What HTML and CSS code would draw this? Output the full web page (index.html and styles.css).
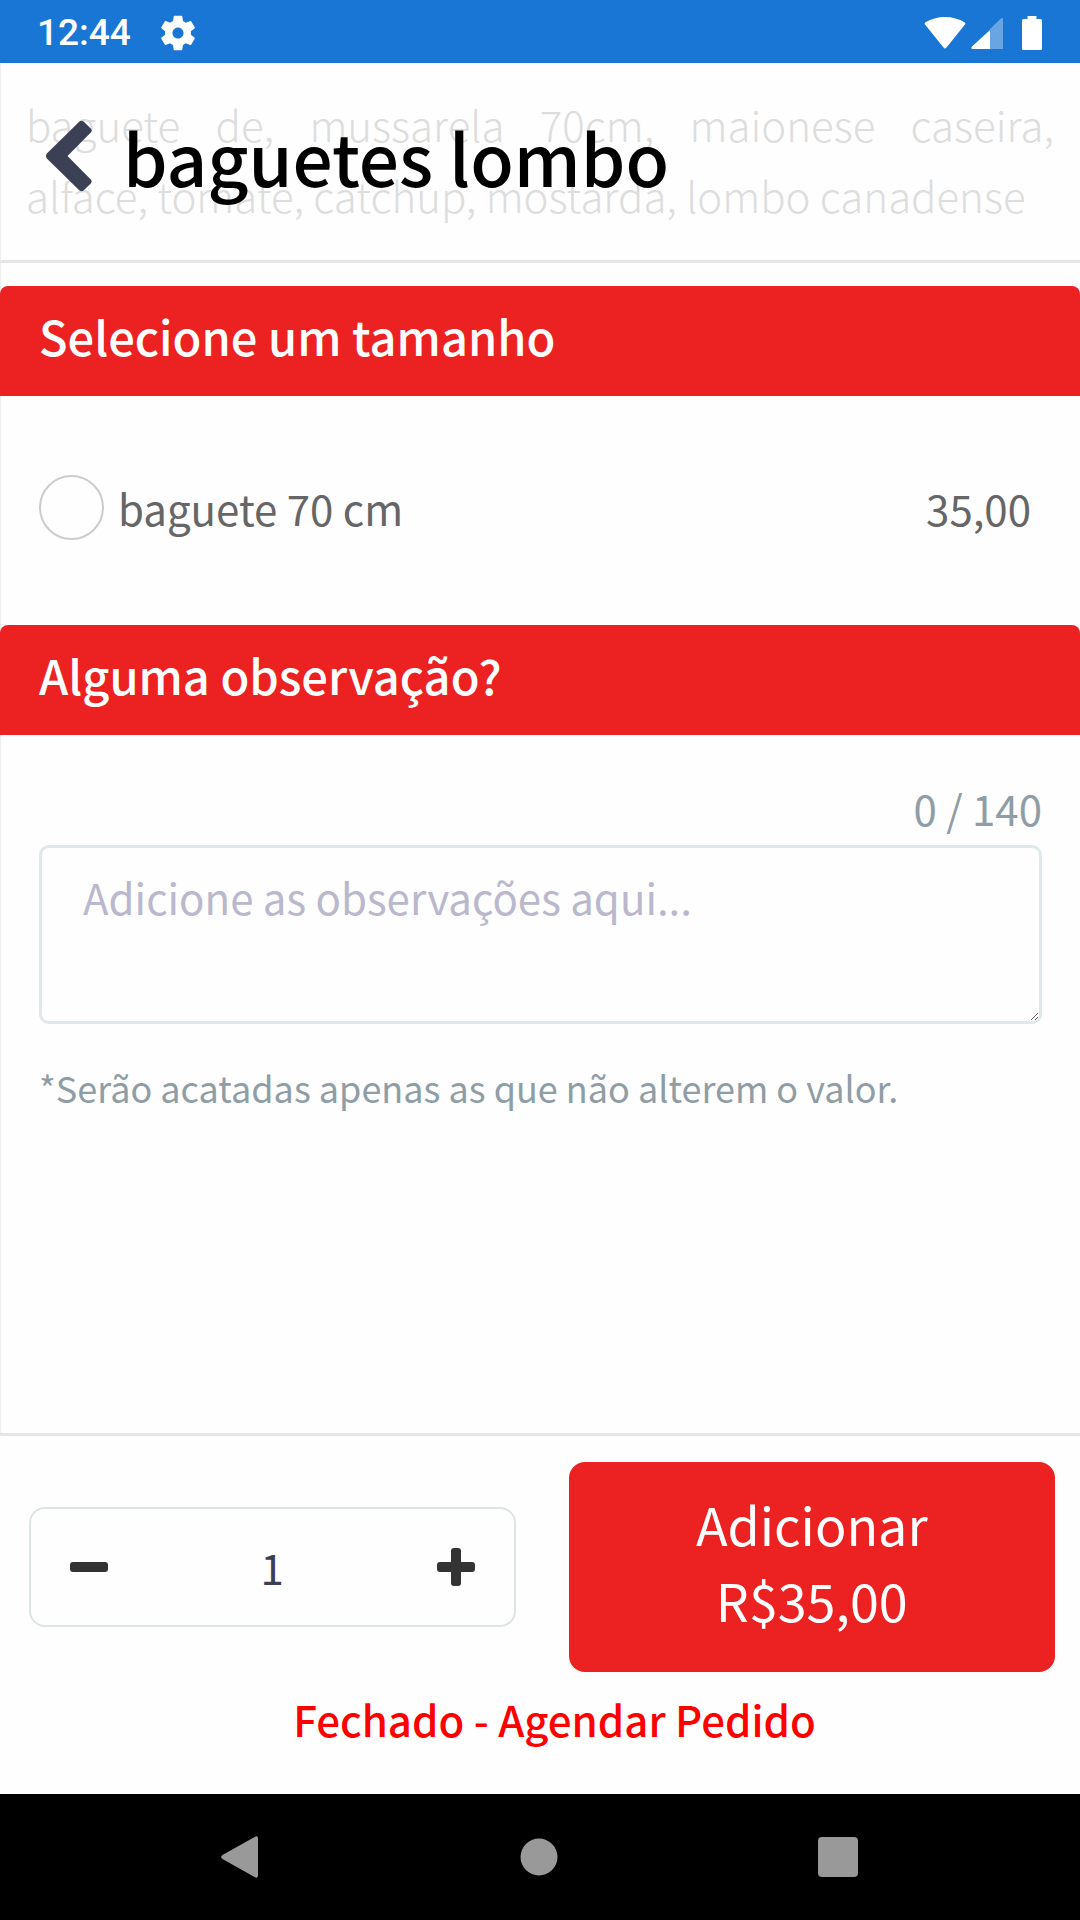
FILE: index.html
```html
<!DOCTYPE html>
<html lang="pt-BR">
<head>
  <meta charset="UTF-8">
  <meta name="viewport" content="width=device-width, initial-scale=1.0">
  <title>baguetes lombo</title>
  <link rel="stylesheet" href="styles.css">
</head>
<body>
  <!-- barra de status -->
  <div class="status-bar">
    <span class="clock">12:44</span>
    <svg class="gear" width="36" height="36" viewBox="2 2 20 20" fill="#fff">
      <path d="M19.14 12.94c.04-.3.06-.61.06-.94 0-.32-.02-.64-.07-.94l2.03-1.58a.49.49 0 0 0 .12-.61l-1.92-3.32a.49.49 0 0 0-.59-.22l-2.39.96c-.5-.38-1.03-.7-1.62-.94l-.36-2.54a.48.48 0 0 0-.48-.41h-3.84c-.24 0-.43.17-.47.41l-.36 2.54c-.59.24-1.13.57-1.62.94l-2.39-.96a.48.48 0 0 0-.59.22L2.74 8.87c-.12.21-.08.47.12.61l2.03 1.58c-.05.3-.09.63-.09.94s.02.64.07.94l-2.03 1.58a.49.49 0 0 0-.12.61l1.92 3.32c.12.22.37.29.59.22l2.39-.96c.5.38 1.03.7 1.62.94l.36 2.54c.05.24.24.41.48.41h3.84c.24 0 .44-.17.47-.41l.36-2.54c.59-.24 1.13-.56 1.62-.94l2.39.96c.22.08.47 0 .59-.22l1.92-3.32c.12-.22.07-.47-.12-.61l-2.01-1.58zM12 15.1A3.1 3.1 0 0 1 8.900 12c0-1.710 1.390-3.100 3.100-3.100s3.100 1.390 3.100 3.100-1.390 3.100-3.100 3.100z"/>
    </svg>
    <div class="status-icons">
      <svg width="42" height="34" viewBox="0 0 42 34" fill="#fff">
        <path d="M1 8.500Q0 7.500 1.200 6.500Q10 1 21 1Q32 1 40.800 6.500Q42 7.500 41 8.500L22.500 31.500Q21 33.500 19.500 31.500Z"/>
      </svg>
      <svg width="32" height="34" viewBox="0 0 32 34" fill="#fff">
        <path fill-opacity=".35" d="M19 13L30 2.500Q32 1.500 32 3V33H19Z"/>
        <path d="M19 14V33H1.500Q-.5 32.500 1 30.500Z"/>
      </svg>
      <svg class="battery" width="20" height="34" viewBox="0 0 20 34" fill="#fff">
        <path d="M5.500 0H14.500V3H18.500Q20 3 20 4.500V32.500Q20 34 18.500 34H1.500Q0 34 0 32.500V4.500Q0 3 1.500 3H5.500Z"/>
      </svg>
    </div>
  </div>

  <main class="content">
    <!-- cabeçalho fixo por cima da descrição -->
    <header class="page-header">
      <button class="back" type="button" aria-label="Voltar">
        <svg width="46" height="72" viewBox="0 0 46 72" fill="#3c4055">
          <path d="M.8 33.500L33.500 1.500Q35.500 0 37.500 1.500L44.800 8.500Q46.500 10.500 44.800 12.500L21.500 36L44.800 59.500Q46.500 61.500 44.800 63.500L37.500 70.500Q35.500 72 33.500 70.500L.8 38.500Q-.8 36 .8 33.500Z"/>
        </svg>
      </button>
      <h1>baguetes lombo</h1>
    </header>

    <p class="description">baguete de, mussarela 70cm, maionese caseira, alface, tomate, catchup, mostarda, lombo canadense</p>

    <!-- tamanho -->
    <section>
      <h2>Selecione um tamanho</h2>
      <div class="option">
        <input type="radio" name="tamanho" id="tamanho70">
        <label for="tamanho70">baguete 70 cm</label>
        <span class="price">35,00</span>
      </div>
    </section>

    <!-- observação -->
    <section>
      <h2><label for="obs">Alguma observação?</label></h2>
      <div class="notes">
        <div class="counter">0 / 140</div>
        <textarea id="obs" maxlength="140" placeholder="Adicione as observações aqui..."></textarea>
        <p class="hint">*Serão acatadas apenas as que não alterem o valor.</p>
      </div>
    </section>
  </main>

  <footer class="order">
    <div class="order-row">
      <div class="stepper">
        <button type="button" aria-label="Diminuir">
          <svg width="38" height="38" viewBox="0 0 38 38" fill="#333">
            <rect y="14" width="38" height="10" rx="3"/>
          </svg>
        </button>
        <input type="text" value="1" aria-label="Quantidade">
        <button type="button" aria-label="Aumentar">
          <svg width="38" height="38" viewBox="0 0 38 38" fill="#333">
            <rect y="14" width="38" height="10" rx="3"/>
            <rect x="14" width="10" height="38" rx="3"/>
          </svg>
        </button>
      </div>
      <button class="add" type="button">Adicionar<br>R$35,00</button>
    </div>
    <a class="closed" href="#">Fechado - Agendar Pedido</a>
  </footer>

  <!-- navegação do sistema -->
  <nav class="system-nav">
    <button type="button" aria-label="Voltar">
      <svg width="42" height="42" viewBox="0 0 42 42" fill="#999">
        <path d="M3.500 19L36 .8Q39 -.6 39 2.500V39.500Q39 42.600 36 41.200L3.500 23Q.8 21 3.500 19Z"/>
      </svg>
    </button>
    <button type="button" aria-label="Início">
      <svg width="42" height="42" viewBox="0 0 42 42" fill="#999">
        <circle cx="21" cy="21" r="18.500"/>
      </svg>
    </button>
    <button type="button" aria-label="Recentes">
      <svg width="42" height="42" viewBox="0 0 42 42" fill="#999">
        <rect x="1" y="1" width="40" height="40" rx="4"/>
      </svg>
    </button>
  </nav>
</body>
</html>
```

FILE: styles.css
```css
* {
  box-sizing: border-box;
}

body {
  margin: 0;
  min-height: 100vh;
  display: flex;
  flex-direction: column;
  background-color: #fefefe;
  font-family: "Noto Sans CJK JP", "Noto Sans", sans-serif;
  font-size: 42px;
  line-height: 60px;
}

h1, h2, p {
  margin: 0;
}

button, input, textarea {
  font: inherit;
}

button {
  border: 0;
  padding: 0;
  background: none;
  cursor: pointer;
}

svg {
  display: block;
}

.status-bar {
  display: flex;
  align-items: center;
  height: 63px;
  padding: 2px 38px 0 37px;
  background-color: #1976d5;
  color: #fff;
}

.clock {
  font-family: Roboto, sans-serif;
  font-size: 37px;
  font-weight: 500;
}

.gear {
  margin-left: 29px;
}

.status-icons {
  display: flex;
  gap: 5px;
  margin-left: auto;
}

.battery {
  margin-left: 14px;
}

.content {
  flex: 1;
  position: relative;
  box-shadow: inset 1px 0 #eee;
}

.page-header {
  position: absolute;
  top: 0;
  left: 0;
  right: 0;
  height: 200px;
  display: flex;
  align-items: center;
  gap: 31px;
  padding: 0 46px 12px;
  border-bottom: 3px solid #e5e5e5;
}

h1 {
  font-size: 71px;
  font-weight: 500;
  line-height: 80px;
  color: #000;
}

.description {
  padding: 25px 26px 56px;
  font-weight: 200;
  line-height: 71px;
  text-align: justify;
  color: #ddd;
}

h2 {
  padding: 20px 39px 30px;
  border-radius: 8px 8px 0 0;
  background-color: #ec2222;
  color: #fff;
  font-size: 47px;
  font-weight: 500;
}

.option {
  display: flex;
  align-items: center;
  padding: 79px 49px 85px 39px;
  color: #666;
}

.option input {
  appearance: none;
  width: 65px;
  height: 65px;
  margin: 0 14px 0 0;
  border: 2px solid #ccc;
  border-radius: 50%;
}

.option input:checked {
  border: 18px solid #ec2222;
}

.price {
  margin-left: auto;
}

.notes {
  padding: 43px 38px 0 39px;
  color: #8f9da5;
}

.counter {
  text-align: right;
}

textarea {
  display: block;
  width: 100%;
  height: 179px;
  margin-top: 7px;
  padding: 19px 41px;
  border: 3px solid #dfe8ea;
  border-radius: 10px;
  background-color: #fefefe;
  color: #3c4055;
}

textarea::placeholder {
  color: #b9b8cc;
}

.hint {
  margin-top: 38px;
  font-size: 36px;
  line-height: 50px;
}

.order {
  padding: 26px 25px 45px 29px;
  border-top: 3px solid #e5e5e5;
}

.order-row {
  display: grid;
  grid-template-columns: minmax(0, 1fr) minmax(0, 1fr);
  align-items: center;
  gap: 53px;
}

.stepper {
  display: flex;
  align-items: center;
  height: 120px;
  padding: 0 39px;
  border: 2px solid #dde4e6;
  border-radius: 16px;
}

.stepper input {
  flex: 1;
  min-width: 0;
  border: 0;
  padding: 0;
  background: none;
  text-align: center;
  color: #3c4055;
}

.add {
  padding: 24px 20px 34px;
  border-radius: 16px;
  background-color: #ec2222;
  color: #fff;
  font-size: 52px;
  line-height: 76px;
}

.closed {
  display: block;
  margin-top: 17px;
  padding-left: 25px;
  text-align: center;
  text-decoration: none;
  font-weight: 500;
  color: #f00;
}

.system-nav {
  display: flex;
  justify-content: space-around;
  align-items: center;
  height: 126px;
  padding: 0 92px 0 90px;
  background-color: #000;
}
```
